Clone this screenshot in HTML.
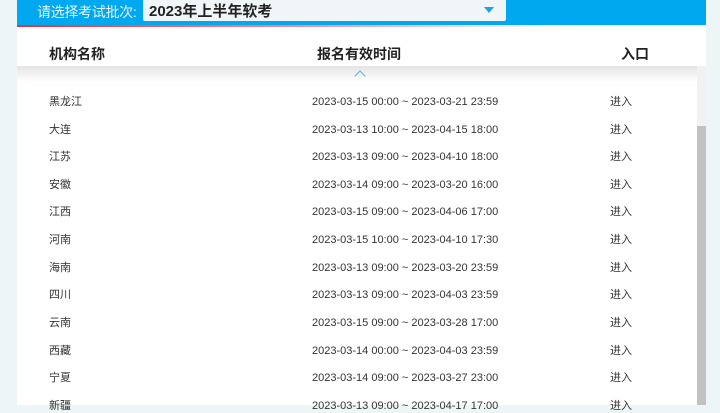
<!DOCTYPE html>
<html><head><meta charset="utf-8"><style>
*{margin:0;padding:0;box-sizing:border-box}
body{width:720px;height:405px;overflow:hidden;background:#eef5f7;font-family:"Liberation Sans","Noto Sans CJK SC",sans-serif;position:relative}
.panel{position:absolute;left:17px;top:0;width:689px;height:405px;background:#fff;overflow:hidden}
.top{position:absolute;left:0;top:0;width:689px;height:25px;background:#00a8ef}
.red{position:absolute;left:0;top:25px;width:689px;height:2px;background:linear-gradient(90deg,#e8323c,#f08a90 40%,#fff 80%)}
.lbl{position:absolute;left:20px;top:2px;color:#e6f4fc;font-size:14px;letter-spacing:-0.3px}
.sel{position:absolute;left:126px;top:0;width:363px;height:21px;background:#f0f6f8;border-radius:0 0 2px 2px}
.sel span{position:absolute;left:6px;top:0;font-size:15px;font-weight:bold;color:#222}
.sel i{position:absolute;right:12px;top:7px;border-left:5px solid transparent;border-right:5px solid transparent;border-top:6px solid #1aa3e8}
.th{position:absolute;top:44px;font-size:14px;font-weight:bold;color:#222}
.shadow{position:absolute;left:0;top:66px;width:680px;height:16px;background:linear-gradient(#e4e4e4,#fff)}
.row{position:absolute;font-size:11px;color:#333;height:14px;line-height:14px}
.sb{position:absolute;left:680px;top:66px;width:10px;height:339px;background:#f1f1f1}
.thumb{position:absolute;left:680px;top:126px;width:10px;height:279px;background:#c1c1c1}
.caret{position:absolute;left:339px;top:72px;width:8px;height:8px;border-left:1.5px solid #4fb3e8;border-top:1.5px solid #4fb3e8;transform:rotate(45deg)}
</style></head><body>
<div class="panel">
<div class="top"></div><div class="red"></div>
<div class="lbl">请选择考试批次:</div>
<div class="sel"><span>2023年上半年软考</span><i></i></div>
<div class="th" style="left:32px">机构名称</div>
<div class="th" style="left:300px">报名有效时间</div>
<div class="th" style="left:604px">入口</div>
<div class="shadow"></div>
<div class="caret"></div>
<div class="sb"></div><div class="thumb"></div>
</div>
<div style="position:absolute;left:17px;top:1px;width:689px;height:405px">
<div class="row" style="left:32px;top:94px">黑龙江</div><div class="row" style="left:295px;top:94px">2023-03-15 00:00 ~ 2023-03-21 23:59</div><div class="row" style="left:593px;top:94px">进入</div>
<div class="row" style="left:32px;top:122px">大连</div><div class="row" style="left:295px;top:122px">2023-03-13 10:00 ~ 2023-04-15 18:00</div><div class="row" style="left:593px;top:122px">进入</div>
<div class="row" style="left:32px;top:149px">江苏</div><div class="row" style="left:295px;top:149px">2023-03-13 09:00 ~ 2023-04-10 18:00</div><div class="row" style="left:593px;top:149px">进入</div>
<div class="row" style="left:32px;top:177px">安徽</div><div class="row" style="left:295px;top:177px">2023-03-14 09:00 ~ 2023-03-20 16:00</div><div class="row" style="left:593px;top:177px">进入</div>
<div class="row" style="left:32px;top:204px">江西</div><div class="row" style="left:295px;top:204px">2023-03-15 09:00 ~ 2023-04-06 17:00</div><div class="row" style="left:593px;top:204px">进入</div>
<div class="row" style="left:32px;top:232px">河南</div><div class="row" style="left:295px;top:232px">2023-03-15 10:00 ~ 2023-04-10 17:30</div><div class="row" style="left:593px;top:232px">进入</div>
<div class="row" style="left:32px;top:260px">海南</div><div class="row" style="left:295px;top:260px">2023-03-13 09:00 ~ 2023-03-20 23:59</div><div class="row" style="left:593px;top:260px">进入</div>
<div class="row" style="left:32px;top:287px">四川</div><div class="row" style="left:295px;top:287px">2023-03-13 09:00 ~ 2023-04-03 23:59</div><div class="row" style="left:593px;top:287px">进入</div>
<div class="row" style="left:32px;top:315px">云南</div><div class="row" style="left:295px;top:315px">2023-03-15 09:00 ~ 2023-03-28 17:00</div><div class="row" style="left:593px;top:315px">进入</div>
<div class="row" style="left:32px;top:343px">西藏</div><div class="row" style="left:295px;top:343px">2023-03-14 00:00 ~ 2023-04-03 23:59</div><div class="row" style="left:593px;top:343px">进入</div>
<div class="row" style="left:32px;top:370px">宁夏</div><div class="row" style="left:295px;top:370px">2023-03-14 09:00 ~ 2023-03-27 23:00</div><div class="row" style="left:593px;top:370px">进入</div>
<div class="row" style="left:32px;top:398px">新疆</div><div class="row" style="left:295px;top:398px">2023-03-13 09:00 ~ 2023-04-17 17:00</div><div class="row" style="left:593px;top:398px">进入</div>
</div>
</body></html>
